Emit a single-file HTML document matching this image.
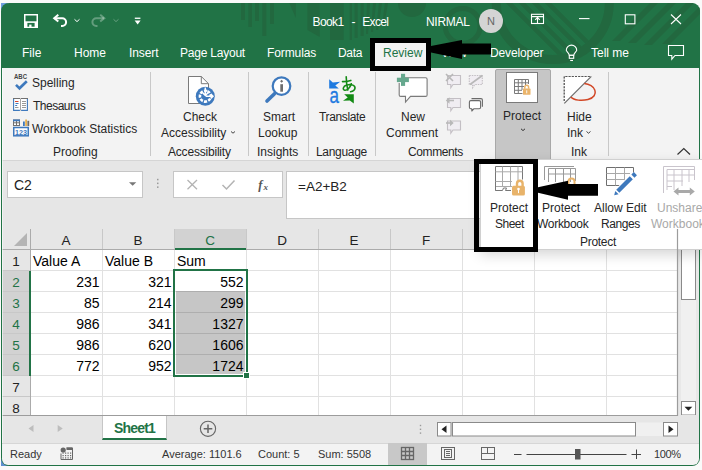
<!DOCTYPE html>
<html><head><meta charset="utf-8">
<style>
*{margin:0;padding:0;box-sizing:border-box}
html,body{width:702px;height:470px;overflow:hidden;background:#fafafa;font-family:"Liberation Sans",sans-serif;position:relative}
.a{position:absolute}
.t{position:absolute;white-space:nowrap;line-height:1}
.w{color:#fff;font-size:12px}
.k{color:#262626;font-size:12px}
svg{position:absolute;overflow:visible}
</style></head><body>
<div class="a" style="left:1px;top:3px;width:7px;height:7px;background:#6f9fe0"></div>
<div class="a" style="left:1px;top:459px;width:7px;height:7px;background:#5f8fd0"></div>
<div class="a" style="left:1px;top:3px;width:699px;height:463px;background:#217346;border-radius:8px"></div>
<svg style="left:0;top:0" width="702" height="67" viewBox="0 0 702 67">
<defs><clipPath id="tc"><rect x="1" y="3" width="699" height="64" rx="8"/></clipPath><clipPath id="ic"><circle cx="552.8" cy="3" r="52"/></clipPath></defs>
<g clip-path="url(#tc)" fill="#22683f">
<rect x="241" y="0" width="4" height="20"/>
<rect x="248.3" y="0" width="3.7" height="27"/>
<rect x="255" y="0" width="4" height="21"/>
<rect x="262.3" y="0" width="4" height="36"/>
<rect x="270" y="0" width="4" height="24"/>
<path d="M289.4 3 H295.8 L295.8 18 Z"/>
<path d="M307.4 3 H319.7 V37 L307.4 30 Z"/>
<rect x="330" y="0" width="13.7" height="40"/>
<rect x="349.7" y="0" width="2.3" height="40"/>
<rect x="354.6" y="0" width="3" height="38"/>
<rect x="360.6" y="0" width="3" height="36"/>
<path d="M367 3 L370 3 L368 34 L366 34 Z"/>
<path d="M373 3 L376 3 L373 32 L371 32 Z"/>
<path d="M379 3 L382 3 L378 30 L376 30 Z"/>
<path d="M385 3 L388 3 L384 26 L382 26 Z"/>
<circle cx="412" cy="3" r="14"/>
<circle cx="462.7" cy="26" r="17.5" fill="none" stroke="#22683f" stroke-width="5"/>
<circle cx="552.8" cy="3" r="56.5" fill="none" stroke="#22683f" stroke-width="9"/>
<g clip-path="url(#ic)" stroke="#22683f" stroke-width="4.5">
<path d="M506 0 L562 56 M519 0 L575 56 M532 0 L588 56 M545 0 L601 56"/>
</g>
<path d="M650 3 L658 3 L620 41 L612 41 Z"/>
<path d="M668 3 L676 3 L636 43 L628 43 Z"/>
<path d="M686 3 L694 3 L652 45 L644 45 Z"/>
<path d="M700 6 L700 14 L670 44 L662 44 Z"/>
</g>
</svg>
<div class="a" style="left:2px;top:68px;width:697px;height:93px;background:#f3f3f3;border-bottom:1px solid #d5d5d5"></div>
<div class="a" style="left:2px;top:161px;width:697px;height:68px;background:#e6e6e6"></div>
<div class="t" style="left:312.5px;top:16px;color:#fff;font-size:12px;letter-spacing:-0.6px">Book1</div>
<div class="t" style="left:351.5px;top:16px;color:#fff;font-size:12px">-</div>
<div class="t" style="left:362.3px;top:16px;color:#fff;font-size:12px;letter-spacing:-0.7px">Excel</div>
<div class="t" style="left:426px;top:16px;color:#fff;font-size:12px;letter-spacing:-0.3px">NIRMAL</div>
<div class="a" style="left:479px;top:9px;width:24px;height:24px;border-radius:50%;background:#d4d4d4"></div>
<div class="t" style="left:487px;top:16px;color:#666;font-size:11px">N</div>
<svg style="left:0;top:0" width="702" height="67" viewBox="0 0 702 67">
<g fill="none" stroke="#fff" stroke-width="1.5">
<rect x="24.75" y="14.75" width="12.5" height="12.5"/>
</g>
<rect x="24" y="21.3" width="14" height="6.7" fill="#fff"/>
<rect x="27.4" y="22.9" width="7.2" height="3.8" fill="#217346"/>
<rect x="29.2" y="24.6" width="2.3" height="3" fill="#fff"/>
<g fill="none" stroke="#fff" stroke-width="2" stroke-linejoin="miter">
<path d="M58.3 14.8 L54.2 18.2 L58.3 21.6"/>
<path d="M54.5 18.2 H62.2 A3.9 3.9 0 0 1 62.2 26 H61"/>
</g>
<path d="M74.5 19.3 L77 21.6 L79.5 19.3" fill="none" stroke="#fff" stroke-width="1"/>
<g fill="none" stroke="#fff" stroke-opacity="0.3" stroke-width="2">
<path d="M100.2 14.8 L104.3 18.2 L100.2 21.6"/>
<path d="M104 18.2 H96.3 A3.9 3.9 0 0 0 96.3 26 H97.5"/>
<path d="M113.5 19.3 L116 21.6 L118.5 19.3" stroke-width="1"/>
</g>
<rect x="134.8" y="17.6" width="5.6" height="1.3" fill="#fff"/>
<path d="M134.6 20.6 H140.6 L137.6 24.4 Z" fill="#fff"/>
<g fill="none" stroke="#fff" stroke-width="1.1">
<rect x="531.5" y="14.3" width="12" height="9.2"/>
<path d="M531.5 16.6 H543.5 M537.5 17.5 V23.5 M535.2 19.8 L537.5 17.5 L539.8 19.8"/>
<path d="M579 18.6 H589.5"/>
<rect x="625.3" y="14.8" width="9.6" height="9"/>
<path d="M671 14.5 L681 24 M681 14.5 L671 24"/>
</g>
<g fill="none" stroke="#fff" stroke-width="1.1">
<path d="M569.3 55.3 C569 52.5 566.3 51.5 566.3 50.3 A5.2 5.2 0 0 1 576.7 50.3 C576.7 51.5 574 52.5 573.7 55.3 Z"/>
<rect x="569.3" y="55.3" width="4.4" height="3"/>
<path d="M570.2 60.5 H573"/>
<path d="M668.5 45.5 H683.5 V55.5 H675 L671.8 59.2 V55.5 H668.5 Z"/>
</g>
</svg>
<div class="t" style="left:22px;top:47px;color:#fff;font-size:12px;letter-spacing:0px">File</div>
<div class="t" style="left:74px;top:47px;color:#fff;font-size:12px;letter-spacing:0px">Home</div>
<div class="t" style="left:129px;top:47px;color:#fff;font-size:12px;letter-spacing:-0.1px">Insert</div>
<div class="t" style="left:180px;top:47px;color:#fff;font-size:12px;letter-spacing:-0.22px">Page Layout</div>
<div class="t" style="left:267px;top:47px;color:#fff;font-size:12px;letter-spacing:-0.1px">Formulas</div>
<div class="t" style="left:338px;top:47px;color:#fff;font-size:12px;letter-spacing:-0.3px">Data</div>
<div class="t" style="left:490px;top:47px;color:#fff;font-size:12px;letter-spacing:-0.15px">Developer</div>
<div class="t" style="left:591px;top:47px;color:#fff;font-size:12px;letter-spacing:0px">Tell me</div>
<div class="a" style="left:374px;top:40px;width:55px;height:27px;background:#f3f3f3"></div>
<div class="t" style="left:383px;top:47px;color:#217346;font-size:12px">Review</div>
<div class="t" style="left:441px;top:47px;color:#fff;font-size:12px">View</div>
<div class="t" style="left:32px;top:77px;color:#262626;font-size:12px">Spelling</div>
<div class="t" style="left:33px;top:100px;color:#262626;font-size:12px;letter-spacing:-0.5px">Thesaurus</div>
<div class="t" style="left:32px;top:123px;color:#262626;font-size:12px">Workbook Statistics</div>
<div class="t" style="left:53px;top:146px;color:#262626;font-size:12px">Proofing</div>
<div class="a" style="left:150px;top:72px;width:1px;height:84px;background:#c8c8c8"></div>
<div class="a" style="left:248px;top:72px;width:1px;height:84px;background:#c8c8c8"></div>
<div class="a" style="left:308px;top:72px;width:1px;height:84px;background:#c8c8c8"></div>
<div class="a" style="left:375px;top:72px;width:1px;height:84px;background:#c8c8c8"></div>
<div class="a" style="left:608px;top:72px;width:1px;height:84px;background:#c8c8c8"></div>
<div class="t" style="left:183px;top:111px;color:#262626;font-size:12px">Check</div>
<div class="t" style="left:161px;top:127px;color:#262626;font-size:12px">Accessibility</div>
<div class="t" style="left:168px;top:146px;color:#262626;font-size:12px;letter-spacing:-0.2px">Accessibility</div>
<div class="t" style="left:263px;top:111px;color:#262626;font-size:12px">Smart</div>
<div class="t" style="left:258px;top:127px;color:#262626;font-size:12px">Lookup</div>
<div class="t" style="left:257px;top:146px;color:#262626;font-size:12px">Insights</div>
<div class="t" style="left:319px;top:111px;color:#262626;font-size:12px;letter-spacing:-0.35px">Translate</div>
<div class="t" style="left:316px;top:146px;color:#262626;font-size:12px;letter-spacing:-0.3px">Language</div>
<div class="t" style="left:401px;top:111px;color:#262626;font-size:12px">New</div>
<div class="t" style="left:386px;top:127px;color:#262626;font-size:12px">Comment</div>
<div class="t" style="left:408px;top:146px;color:#262626;font-size:12px;letter-spacing:-0.4px">Comments</div>
<div class="a" style="left:495px;top:69px;width:56px;height:91px;background:#c6c6c6;border:1px solid #a8a8a8;border-radius:2px 2px 0 0"></div>
<div class="t" style="left:503px;top:110px;color:#262626;font-size:12px">Protect</div>
<div class="t" style="left:567px;top:111px;color:#262626;font-size:12px">Hide</div>
<div class="t" style="left:567px;top:127px;color:#262626;font-size:12px">Ink</div>
<div class="t" style="left:571px;top:146px;color:#262626;font-size:12px">Ink</div>
<svg style="left:0;top:0" width="702" height="160" viewBox="0 0 702 160">
<text x="14" y="78.8" font-family="Liberation Sans" font-weight="bold" font-size="6.6" fill="#444" textLength="13" lengthAdjust="spacingAndGlyphs">ABC</text>
<path d="M16 84.8 L19.5 88.3 L26.8 81.2" fill="none" stroke="#3e79bd" stroke-width="2.6" stroke-linejoin="miter"/>
<rect x="13.6" y="98.6" width="13.8" height="11.8" fill="#fff"/><path d="M13.6 98.6 V110.4 H19.9 M27.4 98.6 V110.4 H21.1" fill="none" stroke="#3e79bd" stroke-width="1.1"/>
<path d="M13 98.5 H20.2 M20.8 98.5 H28" stroke="#707070" stroke-width="1.1"/>
<path d="M20.5 99 V110.5" stroke="#a6a6a6" stroke-width="1"/>
<path d="M15 101.5 H18.5" stroke="#d9452b" stroke-width="1"/>
<path d="M15.5 103.5 H18.5 M15.2 105.5 H17.2" stroke="#3e79bd" stroke-width="1"/>
<path d="M15 107.5 H18.5 M22 101.5 H26 M22 103.5 H26 M22 105.5 H26 M22 107.5 H26" stroke="#999" stroke-width="1"/>
<rect x="13.5" y="120" width="6" height="5.5" fill="#fff" stroke="#707070" stroke-width="1"/>
<rect x="13" y="119.5" width="7" height="1.8" fill="#3e79bd"/>
<path d="M13.5 122.8 H19.5 M16.5 121 V125.5" stroke="#707070" stroke-width="1"/>
<rect x="23" y="121.5" width="1.8" height="4.5" fill="#3e79bd"/>
<rect x="25.2" y="119.5" width="1.8" height="6.5" fill="#e8b14f"/>
<rect x="27.4" y="120.8" width="1.8" height="5.2" fill="#6b6b6b"/>
<rect x="13.75" y="127.5" width="14.5" height="8.3" fill="#fff" stroke="#3e79bd" stroke-width="1.5"/>
<text x="21" y="134.6" text-anchor="middle" font-family="Liberation Sans" font-weight="bold" font-size="7.2" fill="#3e79bd">123</text>

<path d="M188.5 76.5 H201.3 L208.5 83.7 V103.5 H188.5 Z" fill="#fff" stroke="#7a7a7a" stroke-width="1"/>
<path d="M201.3 76.5 V83.7 H208.5" fill="none" stroke="#7a7a7a" stroke-width="1"/>
<circle cx="205.3" cy="96.2" r="9.5" fill="#3e79bd"/>
<circle cx="205.3" cy="96.2" r="5.4" fill="none" stroke="#fff" stroke-width="2.6" stroke-dasharray="3 1.24" transform="rotate(-67.5 205.3 96.2)"/>
<path d="M205.3 87.5 V95.5 M202.6 92.8 L205.3 95.5 L208 92.8 M205.8 96.2 H213 M210.8 94 L213 96.2 L210.8 98.4" fill="none" stroke="#fff" stroke-width="1.5"/>
<path d="M205.3 96.2 L205.3 86 A10 10 0 0 1 215 96.2 Z" fill="#3e79bd" opacity="0"/>

<circle cx="281.5" cy="86.1" r="8.8" fill="#fff" stroke="#3e79bd" stroke-width="2.2"/>
<path d="M267 101 L274.5 93.7" stroke="#3e79bd" stroke-width="3.6" stroke-linecap="round"/>
<path d="M281.6 79.8 L283.1 81.3 L281.6 82.8 L280.1 81.3 Z" fill="#6d6d6d"/>
<rect x="280.3" y="84.2" width="2.7" height="7.5" fill="#6d6d6d"/>

<path d="M329.2 79.2 L332.8 82.5 L340.2 81.8 L335.3 85.4 L338.8 88.4 L329.2 88.4 Z" fill="#1e7ae0"/>
<text x="0" y="0" transform="translate(334.3 102.9) scale(1 1.32)" text-anchor="middle" font-family="Liberation Sans" font-size="17" fill="#1e7ae0" stroke="#1e7ae0" stroke-width="0.25">a</text>
<path d="M344.2 94.2 L353.8 94.2 L353.8 103.4 L349.8 100.6 L343 100.8 L347.7 97.5 Z" fill="#138a14"/>
<g fill="none" stroke="#138a14" stroke-width="1.6" stroke-linecap="round">
<path d="M342.5 81.6 C345 81.6 348 81.2 350.8 80.4"/>
<path d="M346.2 76.8 C346.3 80.5 346.6 85.5 347.8 90"/>
<path d="M351.3 83.8 C350.3 87.3 347.2 90.6 344.7 90.2 C342.4 89.8 342.8 86.2 346.8 85 C351.8 83.7 355.3 85.6 355 88.2 C354.7 90.6 352.5 91.5 350.6 91.8"/>
</g>

<path d="M404.8 77.7 H425.6 Q427.1 77.7 427.1 79.2 V94.9 Q427.1 96.4 425.6 96.4 H410.5 L405.5 102 V96.4 H400.7 Q399.2 96.4 399.2 94.9 V83" fill="#fff" stroke="#7a7a7a" stroke-width="1.1"/>
<rect x="396.9" y="77.7" width="12" height="4.4" fill="#66a88e"/>
<rect x="401" y="73.8" width="4.1" height="12.1" fill="#66a88e"/>

<g fill="#f0edf2" stroke="#c3bfc4" stroke-width="1.1">
<path d="M447.5 75.5 H460.5 V84.5 H453 L450.8 87.8 V84.5 H447.5 Z"/>
<path d="M447.5 98.5 H460.5 V107.5 H453 L450.8 110.8 V107.5 H447.5 Z"/>
<path d="M447.5 121 H460.5 V130 H453 L450.8 133.3 V130 H447.5 Z"/>
<path d="M469.3 75.5 H482.3 V84.5 H474.8 L472.6 87.8 V84.5 H469.3 Z" stroke-dasharray="1.5 1"/>
</g>
<g fill="none" stroke="#b8b8b8" stroke-width="1.6">
<path d="M446 74 L453 81 M453 74 L446 81"/>
<path d="M470 84.5 L482.3 75.5"/>
<path d="M447 100.5 H454"/>
<path d="M446 123 H452"/>
</g>
<path d="M445.8 100.5 L449.5 97.3 V103.7 Z M453.7 123 L450 119.8 V126.2 Z" fill="#b8b8b8"/>
<g fill="none" stroke="#6a6a6a" stroke-width="1.1" stroke-linejoin="round">
<path d="M471.5 98.6 H481 Q482.4 98.6 482.4 100 V106.8"/>
<path d="M470.8 100.6 H479.2 Q480.6 100.6 480.6 102 V107.3 Q480.6 108.7 479.2 108.7 H474 L471.8 111 V108.7 H470.8 Q469.4 108.7 469.4 107.3 V102 Q469.4 100.6 470.8 100.6 Z" fill="#fff"/>
</g>

<rect x="506.5" y="72.5" width="31" height="30" fill="#fff" stroke="#7a7a7a" stroke-width="1"/>
<g fill="none" stroke="#7a7a7a" stroke-width="1">
<path d="M514.5 93.5 V79.5 H528.5 V84"/>
<path d="M514.5 82.8 H528.5 M514.5 86.5 H524 M514.5 90.3 H522 M518.3 79.5 V93.5 M522 79.5 V90 M525.5 79.5 V86 M514.5 93.5 H522.5"/>
</g>
<path d="M524.8 88.8 V87.2 A1.9 1.9 0 0 1 528.6 87.2 V88.8" fill="none" stroke="#eab46b" stroke-width="1.5"/>
<rect x="523" y="88.6" width="7.5" height="6.2" rx="0.6" fill="#eab46b"/>
<rect x="526.3" y="90.3" width="0.9" height="3" fill="#fff"/>

<path d="M564.3 101 V76.5 H591" fill="none" stroke="#555" stroke-width="1.1" stroke-dasharray="2 1.2"/>
<path d="M564.3 103.2 L591.2 76.5 L564.3 76.5 Z" fill="#fff"/>
<path d="M564.3 101 V76.5 H591" fill="none" stroke="#555" stroke-width="1.1" stroke-dasharray="2 1.2"/>
<path d="M564.3 103.4 L591.3 76.4" stroke="#6b6b6b" stroke-width="1.2"/>
<path d="M570.9 97 C574 100.5 582 101 588 99.5 C594 98 596 94 595 90.5 C594 86.5 589 84 584.3 83.6" fill="none" stroke="#d24726" stroke-width="1.5"/>

<path d="M677.5 154.5 L683.8 148.5 L690 154.5" fill="none" stroke="#333" stroke-width="1.2"/>
<path d="M521 128.8 L523 130.6 L525 128.8" fill="none" stroke="#333" stroke-width="1"/>
<path d="M231 131.5 L233 133.2 L235 131.5" fill="none" stroke="#444" stroke-width="1"/>
<path d="M586.5 131.5 L588.5 133.2 L590.5 131.5" fill="none" stroke="#444" stroke-width="1"/>
</svg>
<div class="a" style="left:7px;top:171px;width:136px;height:27px;background:#fff;border:1px solid #c6c6c6"></div>
<div class="t" style="left:14px;top:178px;font-size:14px;color:#222">C2</div>
<div class="a" style="left:173px;top:171px;width:110px;height:27px;background:#fff;border:1px solid #c6c6c6"></div>
<div class="a" style="left:286px;top:171px;width:420px;height:48px;background:#fff;border:1px solid #c6c6c6"></div>
<div class="t" style="left:298px;top:180px;font-size:13.5px;color:#222">=A2+B2</div>
<svg style="left:0;top:0" width="702" height="470" viewBox="0 0 702 470">
<path d="M129 182.3 H136.3 L132.65 185.8 Z" fill="#777"/>
<g fill="#9a9a9a"><rect x="157" y="178.8" width="1.5" height="1.5"/><rect x="157" y="182.6" width="1.5" height="1.5"/><rect x="157" y="186.4" width="1.5" height="1.5"/></g>
<path d="M187.5 180 L197 189.2 M197 180 L187.5 189.2" stroke="#b3b3b3" stroke-width="1.3"/>
<path d="M222.5 185 L226.5 189 L234.5 180.5" fill="none" stroke="#b3b3b3" stroke-width="1.5"/>
<text x="258.3" y="189" font-family="Liberation Serif" font-style="italic" font-weight="bold" font-size="12.5" fill="#555">f</text>
<text x="263.4" y="189.8" font-family="Liberation Serif" font-style="italic" font-weight="bold" font-size="9" fill="#555">x</text>
</svg>
<div class="a" style="left:2px;top:229px;width:676px;height:186px;background:#fff"></div>
<div class="a" style="left:2px;top:229px;width:676px;height:20px;background:#e6e6e6"></div>
<div class="a" style="left:2px;top:249px;width:28px;height:166px;background:#e6e6e6"></div>
<div class="a" style="left:175px;top:229px;width:71px;height:20px;background:#d2d2d2"></div>
<div class="a" style="left:2px;top:271px;width:28px;height:105px;background:#d2d2d2"></div>
<div class="a" style="left:102px;top:249px;width:1px;height:166px;background:#e1e1e1"></div>
<div class="a" style="left:174px;top:249px;width:1px;height:166px;background:#e1e1e1"></div>
<div class="a" style="left:246px;top:249px;width:1px;height:166px;background:#e1e1e1"></div>
<div class="a" style="left:318px;top:249px;width:1px;height:166px;background:#e1e1e1"></div>
<div class="a" style="left:390px;top:249px;width:1px;height:166px;background:#e1e1e1"></div>
<div class="a" style="left:462px;top:249px;width:1px;height:166px;background:#e1e1e1"></div>
<div class="a" style="left:534px;top:249px;width:1px;height:166px;background:#e1e1e1"></div>
<div class="a" style="left:606px;top:249px;width:1px;height:166px;background:#e1e1e1"></div>
<div class="a" style="left:677px;top:249px;width:1px;height:166px;background:#e1e1e1"></div>
<div class="a" style="left:31px;top:270px;width:646px;height:1px;background:#e1e1e1"></div>
<div class="a" style="left:31px;top:291px;width:646px;height:1px;background:#e1e1e1"></div>
<div class="a" style="left:31px;top:312px;width:646px;height:1px;background:#e1e1e1"></div>
<div class="a" style="left:31px;top:333px;width:646px;height:1px;background:#e1e1e1"></div>
<div class="a" style="left:31px;top:354px;width:646px;height:1px;background:#e1e1e1"></div>
<div class="a" style="left:31px;top:375px;width:646px;height:1px;background:#e1e1e1"></div>
<div class="a" style="left:31px;top:396px;width:646px;height:1px;background:#e1e1e1"></div>
<div class="a" style="left:102px;top:229px;width:1px;height:20px;background:#c8c8c8"></div>
<div class="a" style="left:174px;top:229px;width:1px;height:20px;background:#c8c8c8"></div>
<div class="a" style="left:246px;top:229px;width:1px;height:20px;background:#c8c8c8"></div>
<div class="a" style="left:318px;top:229px;width:1px;height:20px;background:#c8c8c8"></div>
<div class="a" style="left:390px;top:229px;width:1px;height:20px;background:#c8c8c8"></div>
<div class="a" style="left:462px;top:229px;width:1px;height:20px;background:#c8c8c8"></div>
<div class="a" style="left:534px;top:229px;width:1px;height:20px;background:#c8c8c8"></div>
<div class="a" style="left:606px;top:229px;width:1px;height:20px;background:#c8c8c8"></div>
<div class="a" style="left:677px;top:229px;width:1px;height:20px;background:#c8c8c8"></div>
<div class="a" style="left:2px;top:270px;width:28px;height:1px;background:#c8c8c8"></div>
<div class="a" style="left:2px;top:291px;width:28px;height:1px;background:#c8c8c8"></div>
<div class="a" style="left:2px;top:312px;width:28px;height:1px;background:#c8c8c8"></div>
<div class="a" style="left:2px;top:333px;width:28px;height:1px;background:#c8c8c8"></div>
<div class="a" style="left:2px;top:354px;width:28px;height:1px;background:#c8c8c8"></div>
<div class="a" style="left:2px;top:375px;width:28px;height:1px;background:#c8c8c8"></div>
<div class="a" style="left:2px;top:396px;width:28px;height:1px;background:#c8c8c8"></div>
<div class="a" style="left:30px;top:229px;width:1px;height:186px;background:#ababab"></div>
<div class="a" style="left:2px;top:249px;width:676px;height:1px;background:#ababab"></div>
<div class="a" style="left:176px;top:291px;width:69px;height:83px;background:rgba(0,0,0,0.225)"></div>
<div class="a" style="left:175px;top:248px;width:71px;height:2px;background:#217346"></div>
<div class="a" style="left:29px;top:271px;width:2px;height:105px;background:#217346"></div>
<svg style="left:14px;top:233px" width="14" height="13"><path d="M13 0 L13 13 L0 13 Z" fill="#b4b4b4"/></svg>
<div class="t" style="left:30px;width:72px;text-align:center;top:234px;font-size:13.5px;color:#222">A</div>
<div class="t" style="left:102px;width:72px;text-align:center;top:234px;font-size:13.5px;color:#222">B</div>
<div class="t" style="left:174px;width:72px;text-align:center;top:234px;font-size:13.5px;color:#217346">C</div>
<div class="t" style="left:246px;width:72px;text-align:center;top:234px;font-size:13.5px;color:#222">D</div>
<div class="t" style="left:318px;width:72px;text-align:center;top:234px;font-size:13.5px;color:#222">E</div>
<div class="t" style="left:390px;width:72px;text-align:center;top:234px;font-size:13.5px;color:#222">F</div>
<div class="t" style="left:462px;width:72px;text-align:center;top:234px;font-size:13.5px;color:#222">G</div>
<div class="t" style="left:534px;width:72px;text-align:center;top:234px;font-size:13.5px;color:#222">H</div>
<div class="t" style="left:606px;width:71px;text-align:center;top:234px;font-size:13.5px;color:#222">I</div>
<div class="t" style="left:2px;width:28px;text-align:center;top:255px;font-size:13.5px;color:#222">1</div>
<div class="t" style="left:2px;width:28px;text-align:center;top:276px;font-size:13.5px;color:#217346">2</div>
<div class="t" style="left:2px;width:28px;text-align:center;top:297px;font-size:13.5px;color:#217346">3</div>
<div class="t" style="left:2px;width:28px;text-align:center;top:318px;font-size:13.5px;color:#217346">4</div>
<div class="t" style="left:2px;width:28px;text-align:center;top:339px;font-size:13.5px;color:#217346">5</div>
<div class="t" style="left:2px;width:28px;text-align:center;top:360px;font-size:13.5px;color:#217346">6</div>
<div class="t" style="left:2px;width:28px;text-align:center;top:381px;font-size:13.5px;color:#222">7</div>
<div class="t" style="left:2px;width:28px;text-align:center;top:402px;font-size:13.5px;color:#222">8</div>
<div class="t" style="left:33px;top:254px;font-size:14px;color:#000">Value A</div>
<div class="t" style="left:105px;top:254px;font-size:14px;color:#000">Value B</div>
<div class="t" style="left:177px;top:254px;font-size:14px;color:#000">Sum</div>
<div class="t" style="left:31px;width:68.5px;text-align:right;top:275px;font-size:14px;color:#000">231</div>
<div class="t" style="left:103px;width:68.5px;text-align:right;top:275px;font-size:14px;color:#000">321</div>
<div class="t" style="left:175px;width:68.5px;text-align:right;top:275px;font-size:14px;color:#000">552</div>
<div class="t" style="left:31px;width:68.5px;text-align:right;top:296px;font-size:14px;color:#000">85</div>
<div class="t" style="left:103px;width:68.5px;text-align:right;top:296px;font-size:14px;color:#000">214</div>
<div class="t" style="left:175px;width:68.5px;text-align:right;top:296px;font-size:14px;color:#000">299</div>
<div class="t" style="left:31px;width:68.5px;text-align:right;top:317px;font-size:14px;color:#000">986</div>
<div class="t" style="left:103px;width:68.5px;text-align:right;top:317px;font-size:14px;color:#000">341</div>
<div class="t" style="left:175px;width:68.5px;text-align:right;top:317px;font-size:14px;color:#000">1327</div>
<div class="t" style="left:31px;width:68.5px;text-align:right;top:338px;font-size:14px;color:#000">986</div>
<div class="t" style="left:103px;width:68.5px;text-align:right;top:338px;font-size:14px;color:#000">620</div>
<div class="t" style="left:175px;width:68.5px;text-align:right;top:338px;font-size:14px;color:#000">1606</div>
<div class="t" style="left:31px;width:68.5px;text-align:right;top:359px;font-size:14px;color:#000">772</div>
<div class="t" style="left:103px;width:68.5px;text-align:right;top:359px;font-size:14px;color:#000">952</div>
<div class="t" style="left:175px;width:68.5px;text-align:right;top:359px;font-size:14px;color:#000">1724</div>
<div class="a" style="left:173px;top:269px;width:75px;height:108px;border:2px solid #217346"></div>
<div class="a" style="left:244px;top:373px;width:5px;height:5px;background:#217346;outline:1px solid #fff"></div>
<div class="a" style="left:678px;top:229px;width:21px;height:186px;background:#e8e8e8"></div>
<svg style="left:0;top:0" width="702" height="470" viewBox="0 0 702 470">
<rect x="681" y="229" width="15" height="172" fill="#f0f0f0"/>
<rect x="681.5" y="401.5" width="14" height="13.5" fill="#fff" stroke="#8a8a8a" stroke-width="1"/>
<path d="M684.5 406.8 L692.3 406.8 L688.4 410.8 Z" fill="#222"/>
<rect x="681.5" y="231.5" width="14" height="68" fill="#fff" stroke="#8a8a8a" stroke-width="1"/>
</svg>
<div class="a" style="left:480px;top:159px;width:222px;height:91px;background:#fff;border:1px solid #d0d0d0;border-right:none;box-shadow:0 5px 12px rgba(0,0,0,0.16)"></div>
<div class="t" style="left:490px;top:201.5px;color:#262626;font-size:12px">Protect</div>
<div class="t" style="left:495px;top:217.5px;color:#262626;font-size:12px;letter-spacing:-0.5px">Sheet</div>
<div class="t" style="left:542px;top:201.5px;color:#262626;font-size:12px">Protect</div>
<div class="t" style="left:537px;top:217.5px;color:#262626;font-size:12px;letter-spacing:-0.3px">Workbook</div>
<div class="t" style="left:594px;top:201.5px;color:#262626;font-size:12px">Allow Edit</div>
<div class="t" style="left:601px;top:217.5px;color:#262626;font-size:12px;letter-spacing:-0.4px">Ranges</div>
<div class="t" style="left:657px;top:201.5px;color:#a8a8a8;font-size:12px">Unshare</div>
<div class="t" style="left:651px;top:217.5px;color:#a8a8a8;font-size:12px">Workbook</div>
<div class="t" style="left:580px;top:235.5px;color:#262626;font-size:12px;letter-spacing:-0.3px">Protect</div>
<svg style="left:0;top:0" width="702" height="470" viewBox="0 0 702 470">
<g fill="none" stroke-width="1">
<path d="M495.5 190.5 V166.5 H522.5 V179.5" stroke="#777"/>
<path d="M495.5 171.8 H522.5 M502.5 166.5 V186.5 M510.5 166.5 V186.5 M518 166.5 V180 M495.5 181.5 H512 M495.5 186.5 H512" stroke="#aaa"/>
<path d="M495.5 186 V190.5 H502.5 L503.5 188 H506.5 L505.5 190.5 H511" stroke="#777"/>
<path d="M544.5 180 V166.5 H574" stroke="#999"/>
<path d="M548.5 182 V168.5 H575.5 V181 M548.5 174 H575.5 M555.5 168.5 V182 M563.5 168.5 V182 M570.5 168.5 V182" stroke="#999"/>
<path d="M606.5 185.5 V167.5 H633.5 V172.5 M606.5 185.5 H620" stroke="#6e6e6e"/><path d="M606.5 173.5 H630 M606.5 179.5 H624 M615.5 167.5 V185.5 M624.5 167.5 V181" stroke="#a8a8a8"/>
<path d="M663.5 193 V166.5 H694.5 V180" stroke="#c9c4cc"/>
<path d="M667 190 V169.5 H694.5 M667 175 H694.5 M667 181 H683 M667 186.5 H672 M674 169.5 V190 M682 169.5 V186 M689 169.5 V182" stroke="#c9c4cc"/>
</g>
<path d="M517 186 V183.5 A2.8 2.8 0 0 1 522.6 183.5 V186" fill="none" stroke="#e8b36a" stroke-width="2.4"/>
<rect x="512" y="185.8" width="12.9" height="9.7" rx="1.5" fill="#e8b36a"/>
<circle cx="518.5" cy="189.1" r="1.3" fill="#fff"/>
<rect x="518" y="189.5" width="1" height="3.6" fill="#fff"/>
<path d="M568.5 184 V181.5 A3 3 0 0 1 574.5 181.5 V184" fill="none" stroke="#e8b36a" stroke-width="2"/>
<path d="M617.8 191.2 L631.3 177.7" stroke="#fff" stroke-width="6.4"/>
<path d="M617.8 191.2 L631.3 177.7" stroke="#3e79bd" stroke-width="4.4"/>
<path d="M632.9 176.1 L635.4 173.6" stroke="#3e79bd" stroke-width="4.4"/>
<path d="M614.2 195.3 L615.3 190.9 L618.6 194.2 Z" fill="#3e79bd"/>
<g fill="#a9a9a9">
<path d="M673.5 191.5 L678.5 187.5 V190 H689.8 V187.5 L694.8 191.5 L689.8 195.5 V193 H678.5 V195.5 Z"/>
</g>
<path d="M431 46 L462 40 V43.5 H491 V54.4 H462 V59 L431 52.4 Z" fill="#000"/>
<path d="M538 187.3 L568 180.8 V184 H598 V195.7 H568 V199.7 L538 192.8 Z" fill="#000"/>
</svg>
<div class="a" style="left:370px;top:38px;width:61px;height:33px;border:5px solid #000"></div>
<div class="a" style="left:474px;top:159px;width:64px;height:93px;border:5px solid #000"></div>
<div class="a" style="left:2px;top:415px;width:697px;height:28px;background:#e6e6e6"></div>
<div class="a" style="left:102px;top:415px;width:65px;height:25px;background:#fff;border:1px solid #c6c6c6;border-top:none;border-bottom:2px solid #217346"></div>
<div class="t" style="left:114px;top:421px;font-size:14px;font-weight:bold;color:#217346;letter-spacing:-0.8px">Sheet1</div>
<div class="a" style="left:2px;top:443px;width:697px;height:22px;background:#f3f3f3;border-radius:0 0 6px 6px"></div>
<div class="a" style="left:2px;top:443px;width:697px;height:1px;background:#d6d6d6"></div>
<div class="t" style="left:10px;top:449px;font-size:11px;color:#333">Ready</div>
<div class="t" style="left:162px;top:449px;font-size:11px;color:#333">Average: 1101.6</div>
<div class="t" style="left:258px;top:449px;font-size:11px;color:#333">Count: 5</div>
<div class="t" style="left:318px;top:449px;font-size:11px;color:#333">Sum: 5508</div>
<div class="t" style="left:654px;top:449px;font-size:11px;color:#333;letter-spacing:-0.4px">100%</div>
<svg style="left:0;top:0" width="702" height="470" viewBox="0 0 702 470">
<path d="M33.5 425 L28.5 428.5 L33.5 432 Z" fill="#bdbdbd"/>
<path d="M57.7 425 L62.7 428.5 L57.7 432 Z" fill="#bdbdbd"/>
<circle cx="208" cy="428.8" r="7.6" fill="none" stroke="#666" stroke-width="1.1"/>
<path d="M208 424.5 V433.1 M203.7 428.8 H212.3" stroke="#666" stroke-width="1.5"/>
<g fill="#9a9a9a"><rect x="419.8" y="424.8" width="1.4" height="1.4"/><rect x="419.8" y="428.6" width="1.4" height="1.4"/><rect x="419.8" y="432.4" width="1.4" height="1.4"/></g>
<rect x="437.5" y="422.5" width="13.5" height="13.5" fill="#fff" stroke="#8a8a8a" stroke-width="1"/>
<path d="M446.5 425.5 L441.5 429.25 L446.5 433 Z" fill="#222"/>
<rect x="452.5" y="422.5" width="183" height="13.5" fill="#fff" stroke="#8a8a8a" stroke-width="1"/>
<rect x="663.5" y="422.5" width="14" height="13.5" fill="#fff" stroke="#8a8a8a" stroke-width="1"/>
<path d="M668.5 425.5 L673.5 429.25 L668.5 433 Z" fill="#222"/>

<circle cx="63.2" cy="450" r="2.6" fill="#666"/>
<path d="M66.5 448 H72.5 V459.5 H61 V453.5" fill="none" stroke="#666" stroke-width="1"/>
<rect x="66.5" y="447.5" width="6" height="2.5" fill="#666"/>
<g fill="#666"><rect x="62.5" y="452.5" width="1.2" height="1.2"/><rect x="65" y="452.5" width="1.2" height="1.2"/><rect x="67.5" y="452.5" width="1.2" height="1.2"/><rect x="70" y="452.5" width="1.2" height="1.2"/>
<rect x="62.5" y="455" width="1.2" height="1.2"/><rect x="65" y="455" width="1.2" height="1.2"/><rect x="67.5" y="455" width="1.2" height="1.2"/><rect x="70" y="455" width="1.2" height="1.2"/>
<rect x="62.5" y="457.3" width="1.2" height="1.2"/><rect x="65" y="457.3" width="1.2" height="1.2"/><rect x="67.5" y="457.3" width="1.2" height="1.2"/><rect x="70" y="457.3" width="1.2" height="1.2"/></g>

<rect x="388" y="443" width="39" height="22" fill="#c8c8c8"/>
<g fill="none" stroke="#666" stroke-width="1">
<rect x="401.5" y="447.5" width="12" height="12" stroke-width="1.3"/>
<path d="M401.5 451.5 H413.5 M401.5 455.5 H413.5 M405.5 447.5 V459.5 M409.5 447.5 V459.5" stroke-width="1.3"/>
<rect x="441.5" y="447.5" width="13" height="12"/>
<rect x="444.5" y="449.5" width="7" height="8"/>
<path d="M446 451.5 H450 M446 453.5 H450 M446 455.5 H450"/>
<rect x="481.5" y="447.5" width="13" height="12"/>
<path d="M481.5 453.5 H494.5 M487.5 447.5 V453.5"/>
</g>
<path d="M514 454.5 H521.5 M526.5 454.5 H626.5 M631.5 454.5 H641 M636.5 449.5 V459" stroke="#444" stroke-width="1"/>
<rect x="636" y="422.5" width="27" height="13.5" fill="#f0f0f0"/>
<path d="M677.5 229 V415.5 H2" fill="none" stroke="#9c9c9c" stroke-width="1.2"/>
<rect x="575" y="449" width="5.5" height="10.5" fill="#555"/>
</svg>
<div class="a" style="left:2px;top:68px;width:1px;height:375px;background:rgba(255,255,255,0.55)"></div>
</body></html>
